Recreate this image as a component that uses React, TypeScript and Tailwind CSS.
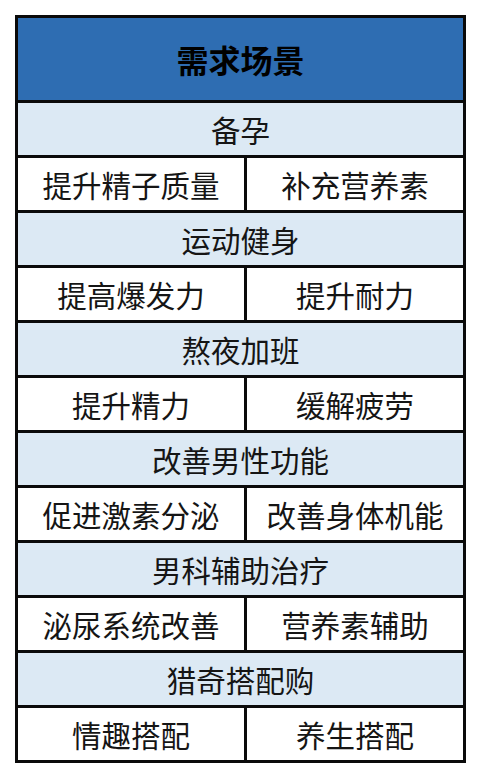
const groups = [
  { title: "备孕", items: ["提升精子质量", "补充营养素"] },
  { title: "运动健身", items: ["提高爆发力", "提升耐力"] },
  { title: "熬夜加班", items: ["提升精力", "缓解疲劳"] },
  { title: "改善男性功能", items: ["促进激素分泌", "改善身体机能"] },
  { title: "男科辅助治疗", items: ["泌尿系统改善", "营养素辅助"] },
  { title: "猎奇搭配购", items: ["情趣搭配", "养生搭配"] },
]

export default function App() {
  return (
    <div
      className="w-[482px] h-[781px] bg-white pt-[15px] pl-[15px]"
      style={{ fontFamily: '"Noto Sans CJK SC", "Noto Sans", sans-serif' }}
    >
      <div className="w-[451px] border-[3px] border-[#0a0a0a] flex flex-col text-[#151515]">
        <div className="h-[85px] bg-[#2e6db2] border-b-[3px] border-[#0a0a0a] flex items-center justify-center text-[32px] font-bold text-black">
          需求场景
        </div>
        {groups.map((g, i) => (
          <div key={g.title} className="flex flex-col">
            <div className="h-[55px] bg-[#dce9f4] border-b-[3px] border-[#0a0a0a] flex items-center justify-center text-[29.5px]">
              {g.title}
            </div>
            <div
              className={`grid grid-cols-[226px_216px] gap-x-[3px] bg-[#0a0a0a] ${
                i < groups.length - 1 ? "h-[55px] border-b-[3px] border-[#0a0a0a]" : "h-[52px]"
              }`}
            >
              {g.items.map((t) => (
                <div key={t} className="bg-white flex items-center justify-center text-[29.5px]">
                  {t}
                </div>
              ))}
            </div>
          </div>
        ))}
      </div>
    </div>
  )
}
